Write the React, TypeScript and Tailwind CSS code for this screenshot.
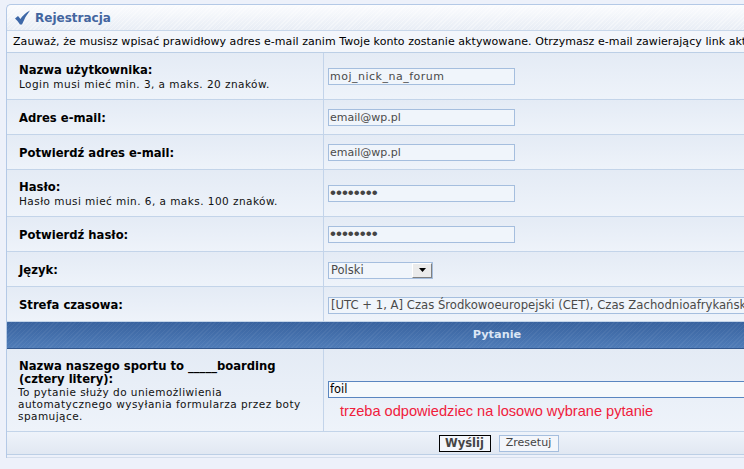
import React from "react";

const font = '[font-family:"DejaVu_Sans",Verdana,sans-serif]';
const sub = "text-[10.5px] leading-[12px] tracking-[0.45px] text-[#111]";
const label = "text-[11.6px] leading-[13px] font-bold text-black";

function Row({ h, title, subtitle, children }: { h: string; title: string; subtitle?: string; children: React.ReactNode }) {
  return (
    <div className={`flex ${h} shrink-0 border-b border-[#c3d4e9] bg-gradient-to-b from-[#e4ebf5] to-[#eef3fa]`}>
      <div className="flex w-[317px] shrink-0 flex-col justify-center border-r border-[#c3d4ea] pt-[2px] pl-[12px]">
        <div className={label}>{title}</div>
        {subtitle && <div className={`mt-[1px] ${sub}`}>{subtitle}</div>}
      </div>
      <div className="flex min-w-0 flex-1 items-center pl-[4px]">{children}</div>
    </div>
  );
}

function Field({ value, password, wide }: { value: string; password?: boolean; wide?: boolean }) {
  const text = wide ? "tracking-[0.5px]" : "tracking-normal";
  return (
    <input
      readOnly
      type={password ? "password" : "text"}
      value={value}
      className={
        password
          ? "h-[17px] w-[187px] border border-[#a5bede] bg-[#f0f5fb] px-[1px] [font-family:'Liberation_Sans',Arial,sans-serif] text-[17px] leading-[15px] text-[#444] outline-none"
          : `h-[17px] w-[187px] border border-[#a5bede] bg-[#f0f5fb] px-[1px] pt-[1px] text-[11px] ${text} text-[#4a4a4a] outline-none`
      }
    />
  );
}

export default function App() {
  return (
    <div className={`h-[469px] w-[744px] overflow-hidden bg-[#edf1fa] pt-[4px] pl-[6px] ${font}`}>
      <div className="w-[800px] rounded-tl-[5px] border-t border-l border-[#b4c9e6]">
        <div className="flex h-[26px] items-center gap-[5px] rounded-tl-[5px] border-b border-[#c8d7ea] [background-image:repeating-linear-gradient(135deg,rgba(255,255,255,0.35)_0_1px,transparent_1px_3px),linear-gradient(#fbfcfe,#e8edf5)] pl-[8px]">
          <svg width="15" height="15" viewBox="0 0 15 15" className="shrink-0">
            <path d="M0 8.5 L3 6 L5.5 9 Q8.5 4 15 0.5 Q10 6.5 7 14.5 L5 14.5 Q3 11 0 8.5 Z" fill="#3e68a8" />
          </svg>
          <span className="text-[12px] font-bold text-[#43659f]">Rejestracja</span>
        </div>
        <div className="flex h-[22px] items-center border-b border-[#bccfe6] bg-[#f3f6fb] pt-[1px] pl-[6px] text-[11px] tracking-[0.06px] whitespace-nowrap text-black">
          Zauważ, że musisz wpisać prawidłowy adres e-mail zanim Twoje konto zostanie aktywowane. Otrzymasz e-mail zawierający link aktywacyjny.
        </div>
        <Row h="h-[47px]" title="Nazwa użytkownika:" subtitle="Login musi mieć min. 3, a maks. 20 znaków.">
          <Field value="moj_nick_na_forum" wide />
        </Row>
        <Row h="h-[35px]" title="Adres e-mail:">
          <Field value="email@wp.pl" />
        </Row>
        <Row h="h-[35px]" title="Potwierdź adres e-mail:">
          <Field value="email@wp.pl" />
        </Row>
        <Row h="h-[47px]" title="Hasło:" subtitle="Hasło musi mieć min. 6, a maks. 100 znaków.">
          <Field value="password" password />
        </Row>
        <Row h="h-[35px]" title="Potwierdź hasło:">
          <Field value="password" password />
        </Row>
        <Row h="h-[35px]" title="Język:">
          <div className="mt-[2px] flex h-[17px] w-[105px] items-center justify-between border border-[#a5bede] bg-[#f0f5fb] pt-[1px] pl-[2px] text-[11.5px] text-[#4a4a4a]">
            <span>Polski</span>
            <span className="-mt-[1px] flex h-[15px] w-[20px] items-center justify-center border-t border-r border-b border-l border-t-white border-r-[#808080] border-b-[#808080] border-l-white bg-[#ebebeb]">
              <svg width="7" height="4" viewBox="0 0 7 4"><path d="M0 0H7L3.5 4Z" fill="#000" /></svg>
            </span>
          </div>
        </Row>
        <Row h="h-[35px]" title="Strefa czasowa:">
          <div className="mt-[2px] flex h-[17px] w-[500px] items-center border border-[#a5bede] bg-[#f0f5fb] pt-[1px] pl-[2px] text-[11.65px] whitespace-nowrap text-[#4a4a4a]">
            [UTC + 1, A] Czas Środkowoeuropejski (CET), Czas Zachodnioafrykański (WAT)
          </div>
        </Row>
        <div className="flex h-[27px] w-[738px] items-center justify-center border-b border-[#33588f] [background-image:repeating-linear-gradient(135deg,rgba(255,255,255,0.05)_0_1px,transparent_1px_3px),linear-gradient(#39639f,#4f7cb8)]">
          <span className="relative left-[121px] text-[11.3px] font-bold text-[#dbe6f5]">Pytanie</span>
        </div>
        <div className="flex h-[83px] border-b border-[#c3d4e9] bg-gradient-to-b from-[#e4ebf5] to-[#eef3fa]">
          <div className="flex w-[317px] shrink-0 flex-col justify-center border-r border-[#c3d4ea] pr-[8px] pl-[12px]">
            <div className={`pt-[1px] ${label}`}>
              Nazwa naszego sportu to _____boarding (cztery litery):
            </div>
            <div className={`-ml-[1px] ${sub}`}>
              To pytanie służy do uniemożliwienia automatycznego wysyłania formularza przez boty spamujące.
            </div>
          </div>
          <div className="relative flex-1 pl-[4px]">
            <input
              readOnly
              value="foil"
              className="mt-[32px] h-[17px] w-[600px] border border-[#5a86c0] bg-[#f5f9fc] px-[1px] text-[11.5px] text-black outline-none"
            />
            <div className="mt-[3px] pl-[12px] [font-family:'Liberation_Sans',Arial,sans-serif] text-[14.6px] leading-[16px] whitespace-nowrap text-[#f0203c]">
              trzeba odpowiedziec na losowo wybrane pytanie
            </div>
          </div>
        </div>
        <div className="flex h-[23px] w-[738px] items-center justify-center gap-[8px] border-b border-[#bccfe6] bg-gradient-to-b from-[#eef3fa] to-[#e1e8f2] pl-[245px]">
          <button className="h-[17px] w-[52px] border border-black bg-[#f3f6fb] text-[11.5px] leading-[14px] font-bold text-[#444]">Wyślij</button>
          <button className="h-[17px] w-[60px] border border-[#a5bede] bg-[#f3f6fb] text-[11px] leading-[14px] text-[#444]">Zresetuj</button>
        </div>
        <div className="mt-[2px] h-px w-[738px] bg-[#d5deec]" />
      </div>
    </div>
  );
}
